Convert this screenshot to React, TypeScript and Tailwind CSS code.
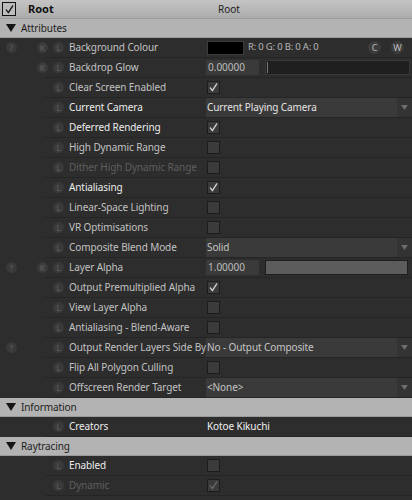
import React from 'react'

type Row = {
  label: string
  tone?: 'bright' | 'normal' | 'dim'
  help?: boolean
  key?: boolean
  value:
    | { type: 'colour' }
    | { type: 'number'; text: string; fill: boolean }
    | { type: 'box'; checked: boolean; dim?: boolean }
    | { type: 'select'; text: string; bright?: boolean }
    | { type: 'text'; text: string }
}

const attributes: Row[] = [
  { label: 'Background Colour', help: true, key: true, value: { type: 'colour' } },
  { label: 'Backdrop Glow', key: true, value: { type: 'number', text: '0.00000', fill: false } },
  { label: 'Clear Screen Enabled', value: { type: 'box', checked: true } },
  { label: 'Current Camera', tone: 'bright', value: { type: 'select', text: 'Current Playing Camera', bright: true } },
  { label: 'Deferred Rendering', tone: 'bright', value: { type: 'box', checked: true } },
  { label: 'High Dynamic Range', value: { type: 'box', checked: false } },
  { label: 'Dither High Dynamic Range', tone: 'dim', value: { type: 'box', checked: false } },
  { label: 'Antialiasing', tone: 'bright', value: { type: 'box', checked: true } },
  { label: 'Linear-Space Lighting', value: { type: 'box', checked: false } },
  { label: 'VR Optimisations', value: { type: 'box', checked: false } },
  { label: 'Composite Blend Mode', value: { type: 'select', text: 'Solid' } },
  { label: 'Layer Alpha', help: true, key: true, value: { type: 'number', text: '1.00000', fill: true } },
  { label: 'Output Premultiplied Alpha', value: { type: 'box', checked: true } },
  { label: 'View Layer Alpha', value: { type: 'box', checked: false } },
  { label: 'Antialiasing - Blend-Aware', value: { type: 'box', checked: false } },
  { label: 'Output Render Layers Side By', help: true, value: { type: 'select', text: 'No - Output Composite' } },
  { label: 'Flip All Polygon Culling', value: { type: 'box', checked: false } },
  { label: 'Offscreen Render Target', value: { type: 'select', text: '<None>' } },
]

const information: Row[] = [
  { label: 'Creators', tone: 'bright', value: { type: 'text', text: 'Kotoe Kikuchi' } },
]

const raytracing: Row[] = [
  { label: 'Enabled', tone: 'bright', value: { type: 'box', checked: false } },
  { label: 'Dynamic', tone: 'dim', value: { type: 'box', checked: true, dim: true } },
]

function Dot({ letter, show = true }: { letter: string; show?: boolean }) {
  return (
    <span
      className={`flex h-[11px] w-[11px] shrink-0 items-center justify-center rounded-full text-[8px] font-bold leading-none ${
        show ? 'bg-[#3a3a3a] text-[#555555]' : ''
      }`}
    >
      {show ? letter : ''}
    </span>
  )
}

function Tick({ color }: { color: string }) {
  return (
    <svg viewBox="0 0 12 12" className="h-[11px] w-[11px]">
      <path d="M2.5 6.5 L4.8 9.5 L9.5 2" fill="none" stroke={color} strokeWidth="1.4" strokeLinecap="round" strokeLinejoin="round" />
    </svg>
  )
}

function Box({ checked, dim }: { checked: boolean; dim?: boolean }) {
  return (
    <span className="ml-px flex h-[13px] w-[13px] items-center justify-center border border-[#1c1c1c] bg-[#3b3b3b]">
      {checked && <Tick color={dim ? '#6a6a6a' : '#d4d4d4'} />}
    </span>
  )
}

function Value({ row }: { row: Row }) {
  const v = row.value
  if (v.type === 'box') return <Box checked={v.checked} dim={v.dim} />
  if (v.type === 'colour')
    return (
      <div className="flex w-full items-center">
        <span className="ml-px h-[14px] w-[37px] border border-[#3c3c3c] bg-black" />
        <span className="ml-[4px] text-[9.5px] tracking-[-0.2px] text-[#b8b8b8]">R: 0 G: 0 B: 0 A: 0</span>
        <span className="ml-auto flex h-[13px] w-[13px] items-center justify-center rounded-full bg-[#3c3c3c] text-[9px] text-[#bdbdbd]">C</span>
        <span className="ml-[10px] mr-[8px] flex h-[13px] w-[13px] items-center justify-center rounded-full bg-[#3c3c3c] text-[9px] text-[#bdbdbd]">W</span>
      </div>
    )
  if (v.type === 'number')
    return (
      <div className="flex w-full items-center">
        <span className="flex h-[15px] w-[53px] items-center bg-[#3a3a3a] pl-[2px] text-[10px] text-[#bcbcbc]">{v.text}</span>
        {v.fill ? (
          <span className="ml-[6px] mr-[4px] h-[15px] flex-1 border border-[#1e1e1e] bg-[#5c5c5c]" />
        ) : (
          <span className="ml-[6px] mr-[2px] flex h-[15px] flex-1 items-center border border-[#383838] bg-[#1f1f1f] pl-px">
            <span className="h-[11px] w-px bg-[#777777]" />
          </span>
        )}
      </div>
    )
  if (v.type === 'select')
    return (
      <div className="flex h-[19px] w-full items-center bg-[#3a3a3a]">
        <span className={`flex-1 pl-[1px] text-[10px] tracking-[-0.1px] ${v.bright ? 'text-[#e4e4e4]' : 'text-[#c4c4c4]'}`}>{v.text}</span>
        <span className="flex h-full w-[15px] items-center justify-center bg-[#333333]">
          <svg viewBox="0 0 8 6" className="h-[5px] w-[7px]">
            <path d="M0 0 H8 L4 6 Z" fill="#6e6e6e" />
          </svg>
        </span>
      </div>
    )
  return <span className="pl-[1px] text-[10px] tracking-[-0.1px] text-[#f2f2f2]">{v.text}</span>
}

function PropRow({ row }: { row: Row }) {
  const tone =
    row.tone === 'bright' ? 'text-[#ececec]' : row.tone === 'dim' ? 'text-[#5e5e5e]' : 'text-[#c2c2c2]'
  return (
    <div>
      <div className="flex h-[19px] items-center">
        <div className="flex w-[206px] shrink-0 items-center overflow-hidden">
          <span className="ml-[6px]">
            <Dot letter="?" show={!!row.help} />
          </span>
          <span className="ml-[20px]">
            <Dot letter="K" show={!!row.key} />
          </span>
          <span className="ml-[5px]">
            <Dot letter="L" />
          </span>
          <span className={`ml-[5px] whitespace-nowrap text-[10px] tracking-[-0.1px] ${tone}`}>{row.label}</span>
        </div>
        <div className="flex flex-1 items-center">
          <Value row={row} />
        </div>
      </div>
      <div className="ml-[45px] h-px bg-[#252525]" />
    </div>
  )
}

function Section({ title }: { title: string }) {
  return (
    <div className="flex h-[19px] items-center border-b border-[#9a9a9a] bg-[#b3b3b3]">
      <svg viewBox="0 0 10 8" className="ml-[6px] h-[8px] w-[10px]">
        <path d="M0 0 H10 L5 8 Z" fill="#141414" />
      </svg>
      <span className="ml-[5px] text-[10px] tracking-[-0.1px] text-[#1c1c1c]">{title}</span>
    </div>
  )
}

export default function App() {
  return (
    <div className="h-[500px] w-[412px] overflow-hidden bg-[#2d2d2d]" style={{ fontFamily: '"Noto Sans", "Open Sans", sans-serif' }}>
      <div className="flex h-[19px] items-center border-b border-[#9c9c9c] bg-gradient-to-b from-[#c4c4c4] to-[#acacac]">
        <span className="ml-[2px] flex h-[14px] w-[14px] items-center justify-center border border-[#111111] bg-[#bcbcbc]">
          <Tick color="#111111" />
        </span>
        <span className="ml-[12px] w-[190px] text-[11px] font-bold text-[#111111]">Root</span>
        <span className="text-[10px] text-[#1e1e1e]">Root</span>
      </div>
      <Section title="Attributes" />
      {attributes.map((r) => (
        <PropRow key={r.label} row={r} />
      ))}
      <Section title="Information" />
      {information.map((r) => (
        <PropRow key={r.label} row={r} />
      ))}
      <Section title="Raytracing" />
      {raytracing.map((r) => (
        <PropRow key={r.label} row={r} />
      ))}
    </div>
  )
}
